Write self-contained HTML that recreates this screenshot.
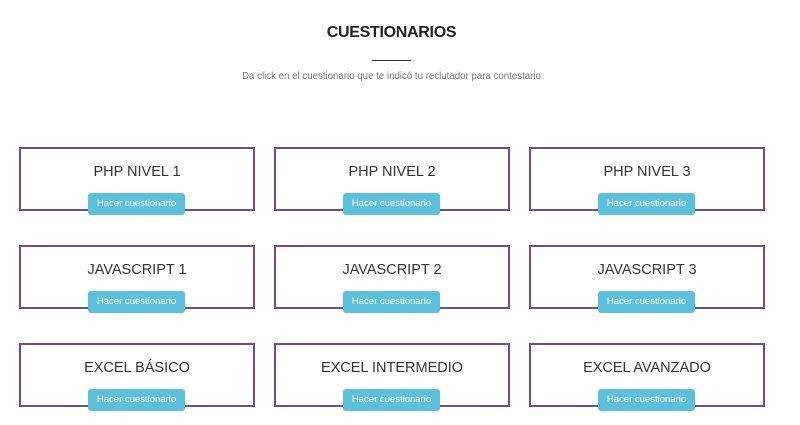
<!DOCTYPE html>
<html><head><meta charset="utf-8"><style>
body{margin:0;width:800px;height:425px;background:#fff;font-family:"Liberation Sans",sans-serif;position:relative;overflow:hidden}
h1{position:absolute;top:24px;left:0;width:783px;text-align:center;margin:0;font-size:16px;font-weight:bold;color:#222;letter-spacing:-0.3px}
.line{position:absolute;left:372px;top:60px;width:39px;height:1px;background:#333}
.sub{position:absolute;top:71px;left:0;width:783px;text-align:center;font-size:9.7px;color:#777}
.box{position:absolute;width:232px;height:60px;border:2px solid #6e4d8c;box-sizing:content-box}
.box .t{position:absolute;top:15px;left:0;width:100%;text-align:center;font-size:14.5px;color:#333}
.box .b{position:absolute;left:67px;top:44px;width:97px;height:22px;background:#5bc0de;border-radius:3px;color:#fff;font-size:9.5px;line-height:22px;text-align:center}
</style></head><body>
<h1>CUESTIONARIOS</h1>
<div class="line"></div>
<div class="sub">Da click en el cuestionario que te indicó tu reclutador para contestario</div>
<div class="box" style="left:19px;top:147px"><div class="t">PHP NIVEL 1</div><div class="b">Hacer cuestionario</div></div>
<div class="box" style="left:274px;top:147px"><div class="t">PHP NIVEL 2</div><div class="b">Hacer cuestionario</div></div>
<div class="box" style="left:529px;top:147px"><div class="t">PHP NIVEL 3</div><div class="b">Hacer cuestionario</div></div>
<div class="box" style="left:19px;top:245px"><div class="t">JAVASCRIPT 1</div><div class="b">Hacer cuestionario</div></div>
<div class="box" style="left:274px;top:245px"><div class="t">JAVASCRIPT 2</div><div class="b">Hacer cuestionario</div></div>
<div class="box" style="left:529px;top:245px"><div class="t">JAVASCRIPT 3</div><div class="b">Hacer cuestionario</div></div>
<div class="box" style="left:19px;top:343px"><div class="t">EXCEL BÁSICO</div><div class="b">Hacer cuestionario</div></div>
<div class="box" style="left:274px;top:343px"><div class="t">EXCEL INTERMEDIO</div><div class="b">Hacer cuestionario</div></div>
<div class="box" style="left:529px;top:343px"><div class="t">EXCEL AVANZADO</div><div class="b">Hacer cuestionario</div></div>
</body></html>
